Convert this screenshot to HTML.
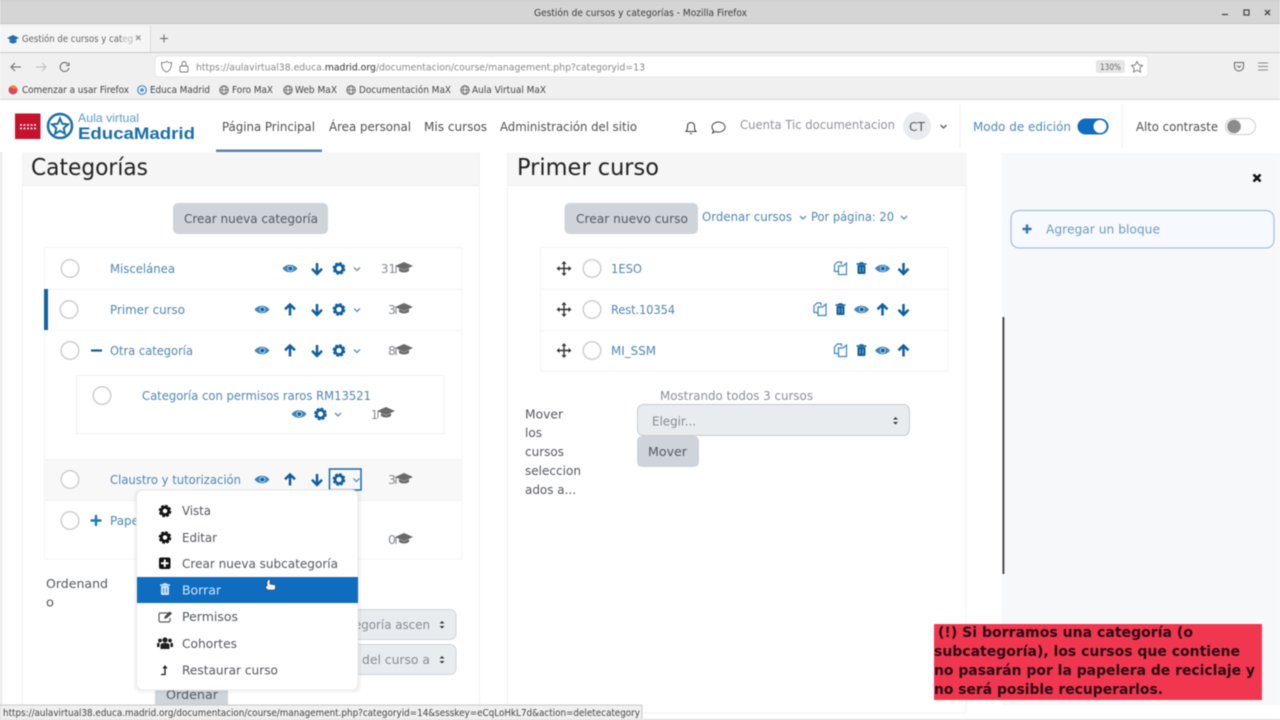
<!DOCTYPE html>
<html lang="es"><head><meta charset="utf-8"><title>Gestión de cursos y categorías - Mozilla Firefox</title>
<style>
html,body{margin:0;padding:0;width:1280px;height:720px;overflow:hidden;background:#fff}
svg{display:block;filter:blur(.5px)}
text{font-family:"DejaVu Sans","Liberation Sans",sans-serif;font-size:12.5px;fill:#555;white-space:pre}
.ff{font-size:9.5px;fill:#444}
.nav{font-size:12.5px;fill:#505050}
.l{font-size:12.5px;fill:#4f86b5}
.m{font-size:12.5px;fill:#54595e}
.h{font-size:23px;fill:#222}
.g{fill:#868c92}
</style></head><body>
<svg width="1280" height="720" viewBox="0 0 1280 720" xmlns="http://www.w3.org/2000/svg">
<defs>
<g id="down"><path d="M0 6V-5M-5 .8L0 6L5 .8" fill="none" stroke="#0f5f9e" stroke-width="2.500"/></g>
<g id="up"><path d="M0 6V-5M-5 -.2L0 -5L5 -.2" fill="none" stroke="#0f5f9e" stroke-width="2.500"/></g>
<g id="eye"><path d="M-7.500 0C-4 -5 4 -5 7.500 0C4 5 -4 5 -7.500 0Z" fill="#3f86bd"/><circle r="3" cx=".3" fill="#dcebf6" opacity=".75"/><circle r="1.900" cx=".3" fill="#0f5f9e"/></g>
<g id="gear"><circle r="3.900" fill="none" stroke="#0f5f9e" stroke-width="2.600"/><circle r="5.400" fill="none" stroke="#0f5f9e" stroke-width="1.900" stroke-dasharray="2.800 1.440"/></g>
<g id="gearb"><circle r="3.700" fill="none" stroke="#111" stroke-width="2.800"/><circle r="5.300" fill="none" stroke="#111" stroke-width="2" stroke-dasharray="2.700 1.460"/></g>
<g id="caret"><path d="M-3 -1.500L0 1.500L3 -1.500" fill="none" stroke="#5f8db3" stroke-width="1.300"/></g>
<g id="cap"><path d="M-9 -2L0 -6L9 -2L0 2Z" fill="#6a6a6a"/><path d="M-5 0V3C-2 5 2 5 5 3V0L0 2.400Z" fill="#6a6a6a"/><path d="M-8 -2V5" stroke="#8a8a8a" stroke-width="1.100"/></g>
<g id="copy"><path d="M1 -4V-6.500H-3L-6 -3.500V3H-2" fill="none" stroke="#3f86bd" stroke-width="1.200"/><path d="M-2 -2.500H2.500L6 -5.500V6H-2Z" fill="#fff" stroke="#3f86bd" stroke-width="1.200"/></g>
<g id="trash"><path d="M-5 -4.500H5M-2 -5.500H2" stroke="#0f5f9e" stroke-width="1.600"/><rect x="-4" y="-3.500" width="8" height="9" rx="1" fill="#0f5f9e"/><path d="M-1.500 -1.500V3.500M1.500 -1.500V3.500" stroke="#9cc3e0" stroke-width=".8"/></g>
<g id="move"><path d="M0 -6.500V6.500M-6.500 0H6.500" stroke="#333" stroke-width="1.400"/><path d="M-2.500 -4.500L0 -7.500L2.500 -4.500ZM-2.500 4.500L0 7.500L2.500 4.500ZM-4.500 -2.500L-7.500 0L-4.500 2.500ZM4.500 -2.500L7.500 0L4.500 2.500Z" fill="#333"/></g>
<g id="radio"><circle r="8.800" fill="#fff" stroke="#c9cbcd" stroke-width="1.400"/></g>
<g id="globe"><circle r="4.200" fill="none" stroke="#666" stroke-width="1"/><ellipse rx="1.900" ry="4.200" fill="none" stroke="#666" stroke-width=".8"/><path d="M-4.200 0H4.200" stroke="#666" stroke-width=".8"/></g>
</defs>

<!-- window chrome -->
<rect width="1280" height="24" fill="#d5d5d5"/>
<rect width="1280" height="1" fill="#bdbdbd"/>
<rect y="23" width="1280" height="1" fill="#c2c2c2"/>
<text x="534" y="16" textLength="213" lengthAdjust="spacingAndGlyphs" style="font-size:9.500px;fill:#3c3c3c">Gestión de cursos y categorías - Mozilla Firefox</text>
<path d="M1222 14.500H1228" stroke="#444" stroke-width="1.300"/>
<rect x="1244" y="10" width="5" height="5" fill="none" stroke="#444" stroke-width="1.200"/>
<path d="M1265 10L1270 15M1270 10L1265 15" stroke="#444" stroke-width="1.400"/>

<rect y="24" width="1280" height="29" fill="#efefef"/>
<rect x="0" y="26" width="150" height="26" fill="#f5f5f5"/>
<rect x="150" y="26" width="1" height="26" fill="#dcdcdc"/>
<rect y="52" width="1280" height="1" fill="#c9c9c9"/>
<path d="M7 38L13 35L19 38L13 41Z" fill="#1c6eb0"/><path d="M9.500 39.500V42C12 44 14 44 16.500 42V39.500L13 41Z" fill="#1c6eb0"/>
<text x="22" y="42" textLength="111" lengthAdjust="spacingAndGlyphs" style="font-size:9.500px;fill:#666">Gestión de cursos y categ</text>
<rect x="122" y="30" width="12" height="18" fill="#f5f5f5" opacity=".55"/>
<path d="M136 35.500L140.500 40M140.500 35.500L136 40" stroke="#777" stroke-width=".9"/>
<path d="M164 34.500V42.500M160 38.500H168" stroke="#666" stroke-width="1"/>

<rect y="53" width="1280" height="27" fill="#f0f0f1"/>
<rect x="155" y="56" width="993" height="21" rx="3" fill="#fff" stroke="#e6e6e6"/>
<path d="M21 67H11M15 63L11 67L15 71" fill="none" stroke="#666" stroke-width="1"/>
<path d="M36 67H46M42 63L46 67L42 71" fill="none" stroke="#bdbdbd" stroke-width="1"/>
<path d="M68 64A4.500 4.500 0 1 0 69 68M69 62.500V65.500H66" fill="none" stroke="#666" stroke-width="1"/>
<path d="M161.500 62.500C164 63 166 62 166.500 61.500C167 62 169 63 171.500 62.500C171.500 68 169.500 71 166.500 72C163.500 71 161.500 68 161.500 62.500Z" fill="none" stroke="#777" stroke-width=".9"/>
<rect x="180" y="66" width="8" height="6" rx="1" fill="none" stroke="#777" stroke-width=".9"/><path d="M182 66V63.500A2 2 0 0 1 186 63.500V66" fill="none" stroke="#777" stroke-width=".9"/>
<text x="196" y="70.500" textLength="449" lengthAdjust="spacingAndGlyphs" style="font-size:9.500px;fill:#888">https://aulavirtual38.educa.<tspan style="fill:#333">madrid.org</tspan>/documentacion/course/management.php?categoryid=13</text>
<rect x="1096" y="60" width="29" height="13" rx="2" fill="#e6e6e6"/>
<text x="1100" y="70" textLength="21" lengthAdjust="spacingAndGlyphs" style="font-size:8.500px;fill:#666">130%</text>
<path d="M1137 61.500L1138.800 65L1142.500 65.500L1139.800 68.200L1140.500 72L1137 70.200L1133.500 72L1134.200 68.200L1131.500 65.500L1135.200 65Z" fill="none" stroke="#777" stroke-width=".9"/>
<path d="M1234.500 62.500H1243.500V66.500A4.500 4.500 0 0 1 1234.500 66.500Z" fill="none" stroke="#666" stroke-width="1"/><path d="M1237 65.500L1239 67.500L1241 65.500" fill="none" stroke="#666" stroke-width=".9"/>
<path d="M1258 63H1268M1258 66.500H1268M1258 70H1268" stroke="#888" stroke-width=".9"/>

<rect y="80" width="1280" height="19.500" fill="#f0f0f1"/>
<rect y="99" width="1280" height="1" fill="#d2d2d2"/>
<circle cx="13" cy="90" r="4.500" fill="#d9485f"/><path d="M10 87C12 84 16 85 17 88L14 89Z" fill="#f08a2c"/>
<text class="ff" x="22" y="93" textLength="107" lengthAdjust="spacingAndGlyphs">Comenzar a usar Firefox</text>
<circle cx="142" cy="90" r="4.300" fill="none" stroke="#4a8fc4" stroke-width="1.200"/><circle cx="142" cy="90" r="1.800" fill="#4a8fc4"/>
<text class="ff" x="150" y="93" textLength="60" lengthAdjust="spacingAndGlyphs">Educa Madrid</text>
<use href="#globe" x="224" y="90"/><text class="ff" x="232" y="93" textLength="41" lengthAdjust="spacingAndGlyphs">Foro MaX</text>
<use href="#globe" x="288" y="90"/><text class="ff" x="295" y="93" textLength="42" lengthAdjust="spacingAndGlyphs">Web MaX</text>
<use href="#globe" x="351" y="90"/><text class="ff" x="359" y="93" textLength="92" lengthAdjust="spacingAndGlyphs">Documentación MaX</text>
<use href="#globe" x="465" y="90"/><text class="ff" x="472" y="93" textLength="74" lengthAdjust="spacingAndGlyphs">Aula Virtual MaX</text>

<!-- page -->
<rect x="0" y="152" width="2" height="553" fill="#e8e8e8"/>
<!-- drawer -->
<rect x="1002" y="153" width="278" height="552" fill="#f7f8fa"/>
<rect x="966" y="153" width="36" height="552" fill="#fff"/>
<rect x="1002.500" y="317" width="1.800" height="257" fill="#3d3d3d"/>
<path d="M1253.500 174.500L1260.500 181.500M1260.500 174.500L1253.500 181.500" stroke="#111" stroke-width="2.600"/>
<rect x="1011" y="210.500" width="263" height="37.500" rx="8" fill="#f6f9fd" stroke="#a8c0d8" stroke-width="1.200"/>
<path d="M1027 224.500V233.500M1022.500 229H1031.500" stroke="#2f79b5" stroke-width="2.500"/>
<text x="1046" y="233.500" textLength="114" lengthAdjust="spacingAndGlyphs" style="fill:#6f9abf;font-size:12.500px">Agregar un bloque</text>

<!-- header -->
<rect y="100" width="1280" height="52" fill="#fff"/>
<rect x="15" y="113.500" width="25.500" height="25.500" fill="#c5122d"/>
<g fill="#fff"><circle cx="21" cy="125" r="1"/><circle cx="24.500" cy="125" r="1"/><circle cx="28" cy="125" r="1"/><circle cx="31.500" cy="125" r="1"/><circle cx="35" cy="125" r="1"/><circle cx="21" cy="128.500" r="1"/><circle cx="24.500" cy="128.500" r="1"/><circle cx="28" cy="128.500" r="1"/><circle cx="31.500" cy="128.500" r="1"/><circle cx="35" cy="128.500" r="1"/></g>
<circle cx="60" cy="126" r="12" fill="none" stroke="#1a6fa8" stroke-width="2.500"/>
<path d="M60 118.500L62.300 123.800L68 124.400L63.700 128.200L65 133.800L60 130.800L55 133.800L56.300 128.200L52 124.400L57.700 123.800Z" fill="none" stroke="#1a6fa8" stroke-width="2"/>
<text x="78" y="122" textLength="61" lengthAdjust="spacingAndGlyphs" style="font-family:'Liberation Sans',sans-serif;font-size:12px;fill:#5b9bc8">Aula virtual</text>
<text x="78" y="139" textLength="117" lengthAdjust="spacingAndGlyphs" style="font-family:'Liberation Sans',sans-serif;font-size:17px;font-weight:700;fill:#1a6fa8">EducaMadrid</text>
<text class="nav" x="222" y="131" textLength="93" lengthAdjust="spacingAndGlyphs">Página Principal</text>
<text class="nav" x="329" y="131" textLength="82" lengthAdjust="spacingAndGlyphs">Área personal</text>
<text class="nav" x="424" y="131" textLength="63" lengthAdjust="spacingAndGlyphs">Mis cursos</text>
<text class="nav" x="500" y="131" textLength="137" lengthAdjust="spacingAndGlyphs">Administración del sitio</text>
<rect x="216" y="149.500" width="106" height="2.500" fill="#5a82ab"/>
<path d="M686 131.500H696C694.500 130 694.500 128.500 694.500 126A3.500 3.500 0 0 0 687.500 126C687.500 128.500 687.500 130 686 131.500ZM690 133.500H692" fill="none" stroke="#444" stroke-width="1.100"/>
<path d="M712 127A6.500 5 0 1 1 715.500 131.500L712.500 133L713.500 130.500C712.500 129.500 712 128.500 712 127Z" fill="none" stroke="#444" stroke-width="1"/>
<text x="740" y="129" textLength="155" lengthAdjust="spacingAndGlyphs" style="fill:#8f9499;font-size:12.500px">Cuenta Tic documentacion</text>
<circle cx="917" cy="126" r="14" fill="#e9ecef"/>
<text x="909" y="131" textLength="16" lengthAdjust="spacingAndGlyphs" style="fill:#555;font-size:12.500px">CT</text>
<path d="M940.500 125L943.500 128L946.500 125" fill="none" stroke="#555" stroke-width="1.300"/>
<rect x="959.500" y="104" width="1" height="44" fill="#efefef"/>
<text x="973" y="131" textLength="98" lengthAdjust="spacingAndGlyphs" style="fill:#4f8abb;font-size:12.500px">Modo de edición</text>
<rect x="1077.500" y="118.500" width="31" height="16" rx="8" fill="#0f6cbf"/>
<circle cx="1100" cy="126.500" r="6.500" fill="#fff"/>
<rect x="1121.500" y="104" width="1" height="44" fill="#efefef"/>
<text x="1136" y="131" textLength="82" lengthAdjust="spacingAndGlyphs" style="fill:#505050;font-size:12.500px">Alto contraste</text>
<rect x="1225.500" y="118.500" width="30" height="16" rx="8" fill="#fff" stroke="#cdcdcd"/>
<circle cx="1234" cy="126.500" r="6.800" fill="#8c8c8c"/>

<!-- left card -->
<rect x="22.500" y="153" width="457" height="560" fill="#fff" stroke="#f1f1f1"/>
<rect x="23" y="153" width="456" height="32" fill="#f6f6f7"/>
<rect x="23" y="185" width="456" height="1" fill="#eeeeee"/>
<text class="h" x="31" y="175" textLength="117" lengthAdjust="spacingAndGlyphs">Categorías</text>
<rect x="173" y="203" width="155" height="31" rx="5" fill="#ced4da"/>
<text class="m" x="184" y="223" textLength="134" lengthAdjust="spacingAndGlyphs">Crear nueva categoría</text>

<rect x="44.500" y="247.500" width="417.500" height="311.500" fill="#fff" stroke="#f3f3f3"/>
<rect x="45" y="289" width="417" height="1" fill="#f3f3f3"/>
<rect x="45" y="330" width="417" height="1" fill="#f3f3f3"/>
<rect x="45" y="459" width="417" height="41" fill="#f8f8f9"/>
<rect x="45" y="459" width="417" height="1" fill="#f0f0f0"/>
<rect x="45" y="500" width="417" height="1" fill="#f0f0f0"/>
<rect x="44" y="289" width="4" height="41" fill="#11649f"/>

<use href="#radio" x="70" y="268.500"/>
<text class="l" x="110" y="273" textLength="65" lengthAdjust="spacingAndGlyphs">Miscelánea</text>
<use href="#eye" x="290" y="268.500"/><use href="#down" x="317" y="268"/><use href="#gear" x="339" y="268.500"/><use href="#caret" x="357" y="269"/>
<text x="381" y="273" textLength="15" lengthAdjust="spacingAndGlyphs" class="g">31</text><use href="#cap" x="404" y="268"/>

<use href="#radio" x="69" y="309.500"/>
<text class="l" x="110" y="314" textLength="75" lengthAdjust="spacingAndGlyphs">Primer curso</text>
<use href="#eye" x="262" y="309.500"/><use href="#up" x="290" y="309.500"/><use href="#down" x="317" y="309"/><use href="#gear" x="339" y="309.500"/><use href="#caret" x="357" y="310"/>
<text x="388" y="314" textLength="8" lengthAdjust="spacingAndGlyphs" class="g">3</text><use href="#cap" x="404" y="309"/>

<use href="#radio" x="70" y="350.500"/>
<path d="M91 350.500H102" stroke="#0f5f9e" stroke-width="2.200"/>
<text class="l" x="110" y="355" textLength="83" lengthAdjust="spacingAndGlyphs">Otra categoría</text>
<use href="#eye" x="262" y="350.500"/><use href="#up" x="290" y="350.500"/><use href="#down" x="317" y="350"/><use href="#gear" x="339" y="350.500"/><use href="#caret" x="357" y="351"/>
<text x="388" y="355" textLength="8" lengthAdjust="spacingAndGlyphs" class="g">8</text><use href="#cap" x="404" y="350"/>

<rect x="76.500" y="375.500" width="367.500" height="58" fill="#fff" stroke="#f1f1f1"/>
<use href="#radio" x="102" y="395.500"/>
<text class="l" x="142" y="400" textLength="229" lengthAdjust="spacingAndGlyphs">Categoría con permisos raros RM13521</text>
<use href="#eye" x="299" y="414"/><use href="#gear" x="320.500" y="414"/><use href="#caret" x="338" y="414.500"/>
<text x="371" y="419" textLength="7" lengthAdjust="spacingAndGlyphs" class="g">1</text><use href="#cap" x="386" y="413"/>

<use href="#radio" x="70" y="479.500"/>
<text class="l" x="110" y="484" textLength="131" lengthAdjust="spacingAndGlyphs">Claustro y tutorización</text>
<use href="#eye" x="262" y="479.500"/><use href="#up" x="290" y="479.500"/><use href="#down" x="317" y="479"/><use href="#gear" x="339" y="479.500"/><use href="#caret" x="356.500" y="480"/>
<rect x="329.500" y="469" width="31.500" height="21" fill="none" stroke="#1a6aa8" stroke-width="1.500"/>
<text x="388" y="484" textLength="8" lengthAdjust="spacingAndGlyphs" class="g">3</text><use href="#cap" x="404" y="479"/>

<use href="#radio" x="70" y="520.500"/>
<path d="M96 515V526M90.500 520.500H101.500" stroke="#1c7ab8" stroke-width="2.400"/>
<text class="l" x="110" y="525" textLength="52" lengthAdjust="spacingAndGlyphs">Papelera</text>
<text x="388" y="544" textLength="8" lengthAdjust="spacingAndGlyphs" class="g">0</text><use href="#cap" x="404" y="539"/>

<text class="m" x="46" y="588" textLength="62" lengthAdjust="spacingAndGlyphs">Ordenand</text>
<text class="m" x="46" y="606.500" textLength="8" lengthAdjust="spacingAndGlyphs">o</text>
<rect x="300" y="609.500" width="156" height="30" rx="6" fill="#e9ecef" stroke="#ced4da"/>
<text x="354" y="629" textLength="76" lengthAdjust="spacingAndGlyphs" class="g">egoría ascen</text>
<path d="M439.500 623.500L442 621L444.500 623.500ZM439.500 626L442 628.500L444.500 626Z" fill="#333"/>
<rect x="300" y="644.500" width="156" height="30" rx="6" fill="#e9ecef" stroke="#ced4da"/>
<text x="362" y="664" textLength="68" lengthAdjust="spacingAndGlyphs" class="g">del curso a</text>
<path d="M439.500 658.500L442 656L444.500 658.500ZM439.500 661L442 663.500L444.500 661Z" fill="#333"/>
<rect x="155" y="680" width="73" height="30" rx="2" fill="#ced4da"/>
<text class="m" x="166" y="699" textLength="52" lengthAdjust="spacingAndGlyphs">Ordenar</text>

<!-- dropdown -->
<rect x="134" y="489" width="227" height="204" rx="7" fill="#000" opacity=".04"/>
<rect x="136.500" y="490" width="221.500" height="200" rx="6" fill="#fff" stroke="#e8e8e8"/>
<rect x="137" y="577" width="221" height="26" fill="#0f6cbf"/>
<use href="#gearb" x="165" y="511"/>
<text class="m" x="182" y="515" textLength="29" lengthAdjust="spacingAndGlyphs">Vista</text>
<use href="#gearb" x="165" y="537.500"/>
<text class="m" x="182" y="542" textLength="35" lengthAdjust="spacingAndGlyphs">Editar</text>
<rect x="159" y="557.500" width="11.500" height="11.500" rx="2" fill="#111"/><path d="M164.800 559.500V567M161 563.300H168.500" stroke="#fff" stroke-width="2"/>
<text class="m" x="182" y="568" textLength="156" lengthAdjust="spacingAndGlyphs">Crear nueva subcategoría</text>
<g transform="translate(165 589.500)"><path d="M-5 -4.500H5M-2 -5.500H2" stroke="#cfe4f5" stroke-width="1.500"/><rect x="-4" y="-3.500" width="8" height="9" rx="1" fill="#cfe4f5"/><path d="M-1.500 -1.500V3.500M1.500 -1.500V3.500" stroke="#0f6cbf" stroke-width=".8"/></g>
<text x="182" y="594.500" textLength="39" lengthAdjust="spacingAndGlyphs" style="fill:#cfe6fb;font-size:12.500px">Borrar</text>
<path d="M267 581.500V586H265.800V588C266.500 589.500 267.500 590 269 590H273.500C275 590 275.500 589 275.500 588V585L270 584V579.500H268.500Z" fill="#f5f5f0" stroke="#333" stroke-width=".6"/>
<path d="M170 613H160.500A1.500 1.500 0 0 0 159 614.500V620.500A1.500 1.500 0 0 0 160.500 622H168.500A1.500 1.500 0 0 0 170 620.500V618" fill="none" stroke="#5a5a5a" stroke-width="1.200"/><path d="M164 619L165 616L170 611.500L172 613.500L167 618Z" fill="#444"/>
<text class="m" x="182" y="621" textLength="56" lengthAdjust="spacingAndGlyphs">Permisos</text>
<g fill="#1f1f1f"><circle cx="165" cy="640" r="2.600"/><circle cx="160" cy="640.500" r="1.900"/><circle cx="170" cy="640.500" r="1.900"/><path d="M160.500 649V645C160.500 643.800 162 643 165 643C168 643 169.500 643.800 169.500 645V649Z"/><path d="M157 647V644C157 643 158 642.500 159.500 642.800V647ZM173 647V644C173 643 172 642.500 170.500 642.800V647Z"/></g>
<text class="m" x="182" y="648" textLength="55" lengthAdjust="spacingAndGlyphs">Cohortes</text>
<path d="M161 674.500H165V666" fill="none" stroke="#1a1a1a" stroke-width="1.300"/><path d="M162.500 668.500L165 665L167.500 668.500Z" fill="#1a1a1a"/>
<text class="m" x="182" y="674.500" textLength="96" lengthAdjust="spacingAndGlyphs">Restaurar curso</text>

<!-- right card -->
<rect x="507.500" y="153" width="458.500" height="560" fill="#fff" stroke="#f1f1f1"/>
<rect x="508" y="153" width="458" height="32" fill="#f6f6f7"/>
<rect x="508" y="185" width="458" height="1" fill="#eeeeee"/>
<text class="h" x="517" y="175" textLength="142" lengthAdjust="spacingAndGlyphs">Primer curso</text>
<rect x="564.500" y="203" width="133.500" height="31" rx="5" fill="#ced4da"/>
<text class="m" x="576" y="223" textLength="112" lengthAdjust="spacingAndGlyphs">Crear nuevo curso</text>
<text class="l" x="702" y="221" textLength="90" lengthAdjust="spacingAndGlyphs">Ordenar cursos</text>
<use href="#caret" x="803" y="217.500"/>
<text class="l" x="811" y="221" textLength="83" lengthAdjust="spacingAndGlyphs">Por página: 20</text>
<use href="#caret" x="904" y="217.500"/>

<rect x="540.500" y="247.500" width="407.500" height="123.500" fill="#fff" stroke="#f3f3f3"/>
<rect x="541" y="289" width="407" height="1" fill="#f3f3f3"/>
<rect x="541" y="330" width="407" height="1" fill="#f3f3f3"/>
<use href="#move" x="564" y="268.500"/><use href="#radio" x="592" y="268.500"/>
<text class="l" x="611" y="273" textLength="31" lengthAdjust="spacingAndGlyphs">1ESO</text>
<use href="#copy" x="840.500" y="268.500"/><use href="#trash" x="861.500" y="268.500"/><use href="#eye" x="882.500" y="268.500"/><use href="#down" x="903.500" y="268"/>
<use href="#move" x="564" y="309.500"/><use href="#radio" x="592" y="309.500"/>
<text class="l" x="611" y="314" textLength="64" lengthAdjust="spacingAndGlyphs">Rest.10354</text>
<use href="#copy" x="820" y="309.500"/><use href="#trash" x="840.500" y="309.500"/><use href="#eye" x="861.500" y="309.500"/><use href="#up" x="882.500" y="309.500"/><use href="#down" x="903.500" y="309"/>
<use href="#move" x="564" y="350.500"/><use href="#radio" x="592" y="350.500"/>
<text class="l" x="611" y="355" textLength="45" lengthAdjust="spacingAndGlyphs">MI_SSM</text>
<use href="#copy" x="840.500" y="350.500"/><use href="#trash" x="861.500" y="350.500"/><use href="#eye" x="882.500" y="350.500"/><use href="#up" x="903.500" y="350.500"/>

<text x="660" y="400" textLength="153" lengthAdjust="spacingAndGlyphs" style="fill:#8b9095;font-size:12.500px">Mostrando todos 3 cursos</text>
<text class="m" x="525" y="418.500" textLength="38" lengthAdjust="spacingAndGlyphs">Mover</text>
<text class="m" x="525" y="437" textLength="17" lengthAdjust="spacingAndGlyphs">los</text>
<text class="m" x="525" y="456" textLength="39" lengthAdjust="spacingAndGlyphs">cursos</text>
<text class="m" x="525" y="475" textLength="56" lengthAdjust="spacingAndGlyphs">seleccion</text>
<text class="m" x="525" y="494" textLength="51" lengthAdjust="spacingAndGlyphs">ados a...</text>
<rect x="637.500" y="404.500" width="272" height="31" rx="6" fill="#e9ecef" stroke="#c6cbd0"/>
<text x="652" y="425.500" textLength="44" lengthAdjust="spacingAndGlyphs" class="g">Elegir...</text>
<path d="M893 419.500L895.500 417L898 419.500ZM893 422L895.500 424.500L898 422Z" fill="#333"/>
<rect x="637" y="436" width="62" height="31" rx="5" fill="#ced4da"/>
<text class="m" x="648" y="456" textLength="39" lengthAdjust="spacingAndGlyphs">Mover</text>

<!-- note -->
<rect x="934" y="624" width="328" height="76" fill="#f0374f"/>
<g>
<text x="938" y="637" textLength="255" lengthAdjust="spacingAndGlyphs" style="font-size:14px;font-weight:700;fill:#2a0a12">(!) Si borramos una categoría (o</text>
<text x="934" y="656" textLength="306" lengthAdjust="spacingAndGlyphs" style="font-size:14px;font-weight:700;fill:#2a0a12">subcategoría), los cursos que contiene</text>
<text x="934" y="675" textLength="321" lengthAdjust="spacingAndGlyphs" style="font-size:14px;font-weight:700;fill:#2a0a12">no pasarán por la papelera de reciclaje y</text>
<text x="934" y="694" textLength="229" lengthAdjust="spacingAndGlyphs" style="font-size:14px;font-weight:700;fill:#2a0a12">no será posible recuperarlos.</text>
</g>

<!-- status bar -->
<rect x="0" y="705" width="642" height="15" fill="#f0f0f0" stroke="#c9c9c9"/>
<rect x="643" y="719" width="637" height="1" fill="#d5d5d5"/>
<text class="ff" x="3" y="716" textLength="637" lengthAdjust="spacingAndGlyphs">https://aulavirtual38.educa.madrid.org/documentacion/course/management.php?categoryid=14&amp;sesskey=eCqLoHkL7d&amp;action=deletecategory</text>
</svg>
</body></html>
